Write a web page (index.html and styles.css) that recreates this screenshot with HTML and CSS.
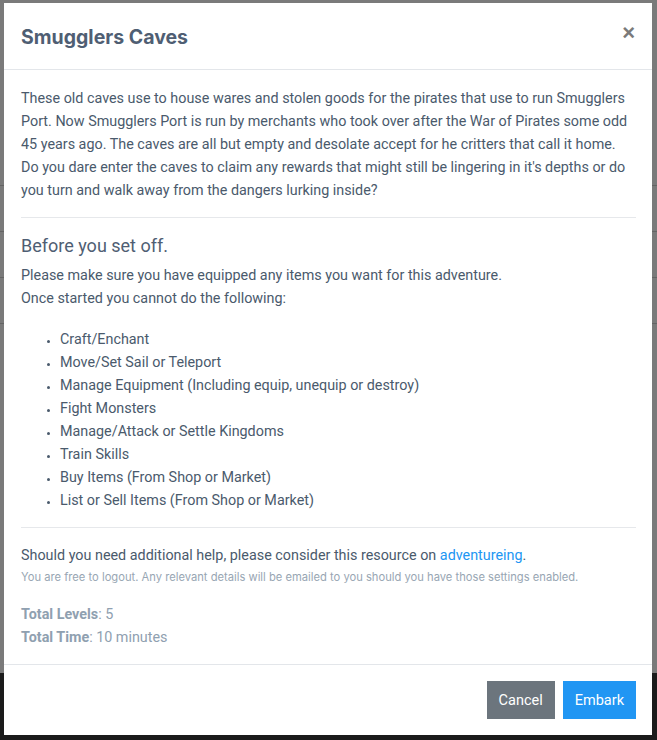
FILE: index.html
```html
<!DOCTYPE html>
<html lang="en">
<head>
<meta charset="utf-8">
<title>Smugglers Caves</title>
<link rel="stylesheet" href="styles.css">
</head>
<body>
<div class="page">
  <div class="page-main">
    <div class="page-row"></div>
    <div class="page-row"></div>
    <div class="page-row"></div>
    <div class="page-row"></div>
  </div>
  <div class="page-foot"></div>
</div>
<div class="backdrop"></div>
<div class="modal">
  <div class="modal-dialog">
    <div class="modal-header">
      <h4 class="modal-title">Smugglers Caves</h4>
      <button class="close" type="button" aria-label="Close">&times;</button>
    </div>
    <div class="modal-body">
      <p class="intro">These old caves use to house wares and stolen goods for the pirates that use to run Smugglers Port. Now Smugglers Port is run by merchants who took over after the War of Pirates some odd 45 years ago. The caves are all but empty and desolate accept for he critters that call it home. Do you dare enter the caves to claim any rewards that might still be lingering in it's depths or do you turn and walk away from the dangers lurking inside?</p>
      <hr class="rule">
      <h5 class="section-title">Before you set off.</h5>
      <p class="lead-text">Please make sure you have equipped any items you want for this adventure.<br>Once started you cannot do the following:</p>
      <ul class="rules-list">
        <li>Craft/Enchant</li>
        <li>Move/Set Sail or Teleport</li>
        <li>Manage Equipment (Including equip, unequip or destroy)</li>
        <li>Fight Monsters</li>
        <li>Manage/Attack or Settle Kingdoms</li>
        <li>Train Skills</li>
        <li>Buy Items (From Shop or Market)</li>
        <li>List or Sell Items (From Shop or Market)</li>
      </ul>
      <hr class="rule">
      <p class="help">Should you need additional help, please consider this resource on <a href="#" class="link">adventureing</a>.</p>
      <p class="note">You are free to logout. Any relevant details will be emailed to you should you have those settings enabled.</p>
      <dl class="stats">
        <div class="stat"><dt>Total Levels</dt><dd>: 5</dd></div>
        <div class="stat"><dt>Total Time</dt><dd>: 10 minutes</dd></div>
      </dl>
    </div>
    <div class="modal-footer">
      <button class="btn btn-cancel" type="button">Cancel</button>
      <button class="btn btn-primary" type="button">Embark</button>
    </div>
  </div>
</div>
</body>
</html>
```

FILE: styles.css
```css
* { box-sizing: border-box; }
html, body { margin: 0; padding: 0; }
body {
  font-family: "Roboto", "Helvetica Neue", Arial, sans-serif;
  font-size: 14.35px;
  color: #4a5a6c;
  background: #ffffff;
  height: 740px;
  overflow: hidden;
}
.page { display: flex; flex-direction: column; height: 740px; }
.page-main {
  height: 673px;
  background: #f4f4f4;
  display: flex;
  flex-direction: column;
  padding-top: 140px;
}
.page-row { height: 46px; border-bottom: 1px solid #c8c8c8; }
.page-foot { flex: 1; background: #363636; }
.backdrop {
  position: fixed;
  inset: 0;
  background: rgba(0, 0, 0, 0.5);
}
.modal {
  position: fixed;
  inset: 0;
  display: flex;
  justify-content: flex-start;
  padding: 3px 0 0 4px;
}
.modal-dialog {
  width: 648px;
  height: 732px;
  background: #fff;
  display: flex;
  flex-direction: column;
}
.modal-header {
  display: flex;
  align-items: center;
  justify-content: space-between;
  height: 67px;
  padding: 0 17px;
  border-bottom: 1px solid #e3e6ea;
}
.modal-title {
  margin: 2px 0 0;
  font-family: "Inter", "Roboto", sans-serif;
  font-size: 19.5px;
  font-weight: 700;
  color: #4f5e73;
  line-height: 30px;
}
.close {
  border: 0;
  background: none;
  padding: 0;
  font-family: Arial, sans-serif;
  font-size: 22px;
  font-weight: 700;
  color: #7a7a7a;
  line-height: 1;
  margin-top: -6px;
  margin-right: 0;
}
.modal-body {
  flex: 1;
  padding: 17px 16px 0 17px;
}
.intro { margin: 0; line-height: 23px; }
.rule { border: 0; border-top: 1px solid #e6e8eb; margin: 15px 0 16px; }
.section-title {
  margin: 0 0 6px;
  font-size: 18px;
  font-weight: 400;
  line-height: 24px;
  color: #4f5e73;
}
.lead-text { margin: 0 0 18px; line-height: 23px; }
.rules-list { margin: 0; padding-left: 39px; line-height: 23px; }
.rules-list li::marker { font-size: 11px; }
.help { margin: 0; line-height: 23px; }
.link { color: #2196f3; text-decoration: none; }
.note { margin: 0 0 16px; font-family: "Inter", sans-serif; font-size: 11.2px; line-height: 20px; color: #98a6b3; }
.stats { margin: 0; color: #8fa0b0; line-height: 23px; }
.stat { display: flex; }
.stat dt { font-weight: 700; }
.stat dd { margin: 0; }
.modal-footer {
  height: 71px;
  border-top: 1px solid #e3e6ea;
  display: flex;
  justify-content: flex-end;
  align-items: center;
  gap: 8px;
  padding: 0 16px;
}
.btn {
  border: 0;
  height: 38px;
  padding: 0 12px;
  font-family: inherit;
  font-size: 14.5px;
  color: #fff;
}
.btn-cancel { background: #6c757d; }
.btn-primary { background: #2196f3; }
```
